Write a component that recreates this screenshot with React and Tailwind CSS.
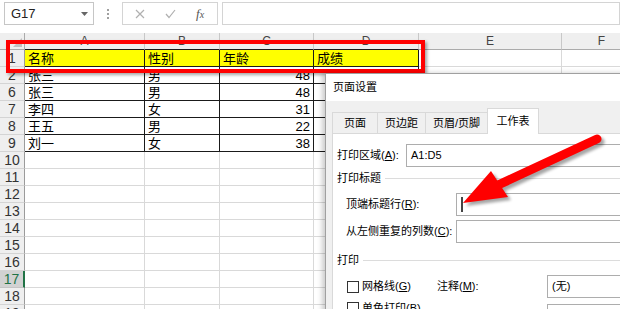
import React from "react";

const cols = [
  { key: "A", w: "w-[120px]" },
  { key: "B", w: "w-[75px]" },
  { key: "C", w: "w-[94px]" },
  { key: "D", w: "w-[105px]" },
  { key: "E", w: "w-[143px]" },
  { key: "F", w: "w-[80px]" },
];

const data = {
  1: ["名称", "性别", "年龄", "成绩"],
  2: ["张三", "男", "48", ""],
  6: ["张三", "男", "48", ""],
  7: ["李四", "女", "31", ""],
  8: ["王五", "男", "22", ""],
  9: ["刘一", "女", "38", ""],
};

const rowNums = [1, 2, 6, 7, 8, 9, 10, 11, 12, 13, 14, 15, 16, 17, 18, 19];

const RowHeader = ({ n }) => {
  if (n === 17) {
    return (
      <div className="flex h-[17px] w-[25px] shrink-0 items-center justify-center border-b border-r-2 border-b-[#c4c4c4] border-r-[#217346] bg-[#d2d2d2] text-[14px] text-[#217346]">
        {n}
      </div>
    );
  }
  return (
    <div className="flex h-[17px] w-[25px] shrink-0 items-center justify-center border-b border-r border-b-[#d4d4d4] border-r-[#9b9b9b] bg-[#efefef] text-[14px] text-[#333]">
      {n}
    </div>
  );
};

const Cell = ({ n, ci, col }) => {
  const values = data[n];
  const inTable = values && ci < 4;
  const text = values && ci < 4 ? values[ci] : "";
  const isNum = /^\d+$/.test(text);
  let cls = "flex h-[17px] shrink-0 items-center border-b border-r border-[#d9d9d9] bg-white px-[3px] text-[13px] text-black";
  if (inTable && n === 1) {
    cls = "flex h-[17px] shrink-0 items-center border-b border-r border-[#1a1a1a] bg-[#ffff00] px-[3px] text-[13px] text-black";
  } else if (inTable) {
    cls = "flex h-[17px] shrink-0 items-center border-b border-r border-[#1a1a1a] bg-white px-[3px] text-[13px] text-black";
  }
  return (
    <div className={`${cls} ${col.w} ${isNum ? "justify-end" : "justify-start"}`}>
      <span className="leading-none">{text}</span>
    </div>
  );
};

const Tab = ({ label, w, active }) =>
  active ? (
    <div className={`relative z-10 -mb-px flex h-[26px] items-center justify-center border border-b-0 border-[#d9d9d9] bg-white ${w}`}>
      {label}
    </div>
  ) : (
    <div className={`-mr-px flex h-[21px] items-center justify-center border border-b-0 border-[#d9d9d9] bg-[#f0f0f0] ${w}`}>
      {label}
    </div>
  );

const GroupTitle = ({ children, className }) => (
  <div className={`flex h-[16px] items-center ${className}`}>
    <span>{children}</span>
    <div className="ml-[4px] h-px flex-1 bg-[#dcdcdc]" />
  </div>
);

const Box = ({ children, className }) => (
  <div className={`flex h-[23px] flex-1 items-center border border-[#adadad] bg-white pl-[4px] ${className || ""}`}>
    {children}
  </div>
);

const CheckBox = () => <div className="h-[12px] w-[12px] shrink-0 border border-[#333] bg-white" />;

export default function App() {
  return (
    <div className="relative h-[309px] w-[620px] overflow-hidden bg-white font-['Liberation_Sans','Noto_Sans_CJK_SC',sans-serif]">
      {/* formula bar */}
      <div className="flex h-[33px] items-start bg-white pt-[2px]">
        <div className="ml-[4px] flex h-[23px] w-[90px] items-center justify-between border border-[#c6c6c6] pl-[6px] pr-[5px] text-[13px] text-[#222]">
          <span>G17</span>
          <svg width="7" height="4" viewBox="0 0 7 4">
            <path d="M0 0 L7 0 L3.5 4 Z" fill="#666" />
          </svg>
        </div>
        <div className="ml-[12px] flex h-[23px] w-[4px] flex-col items-center justify-center gap-[2px]">
          <div className="h-[2px] w-[2px] bg-[#a0a0a0]" />
          <div className="h-[2px] w-[2px] bg-[#a0a0a0]" />
          <div className="h-[2px] w-[2px] bg-[#a0a0a0]" />
        </div>
        <div className="ml-[12px] flex h-[23px] w-[96px] items-center border border-[#d4d4d4]">
          <svg className="ml-[12px]" width="10" height="10" viewBox="0 0 10 10">
            <path d="M1 1 L9 9 M9 1 L1 9" stroke="#b0b0b0" strokeWidth="1.2" />
          </svg>
          <svg className="ml-[20px]" width="11" height="10" viewBox="0 0 11 10">
            <path d="M1 5 L4 8.5 L10 1" stroke="#b0b0b0" strokeWidth="1.2" fill="none" />
          </svg>
          <span className="ml-[20px] font-['Liberation_Serif',serif] text-[13px] italic text-[#555]">
            f<span className="text-[10px]">x</span>
          </span>
        </div>
        <div className="ml-[4px] h-[23px] flex-1 border border-[#d4d4d4]" />
      </div>

      {/* column headers */}
      <div className="flex h-[17px]">
        <div className="relative h-[17px] w-[25px] shrink-0 border-b border-r border-[#ababab] bg-[#efefef]">
          <svg className="absolute bottom-[2px] right-[2px]" width="9" height="9" viewBox="0 0 9 9">
            <path d="M9 0 L9 9 L0 9 Z" fill="#c0c0c0" />
          </svg>
        </div>
        {cols.map((c, i) => (
          <div
            key={c.key}
            className={`flex h-[17px] shrink-0 items-center justify-center border-b border-r border-r-[#c8c8c8] bg-[#efefef] text-[12px] text-[#444] ${c.w} ${i < 4 ? "border-b-[#1a1a1a]" : "border-b-[#ababab]"}`}
          >
            {c.key}
          </div>
        ))}
      </div>

      {/* rows */}
      {rowNums.map((n) => (
        <div key={n} className="flex">
          <RowHeader n={n} />
          {cols.map((c, i) => (
            <Cell key={c.key} n={n} ci={i} col={c} />
          ))}
        </div>
      ))}

      {/* red highlight around header row */}
      <div className="absolute left-[6px] top-[40px] h-[33px] w-[419px] border-4 border-[#ff0000] shadow-[2px_2px_3px_rgba(0,0,0,0.35)]" />

      {/* page setup dialog */}
      <div className="absolute left-[325px] top-[73px] h-[250px] w-[320px] border-l border-t border-[#a0a0a0] bg-[#f0f0f0] text-[11px] text-black shadow-[-3px_0_5px_rgba(0,0,0,0.2)]">
        <div className="flex h-[27px] items-center bg-white pl-[7px]">页面设置</div>
        <div className="pl-[6px] pt-[6px]">
          <div className="flex h-[26px] items-end">
            <Tab label="页面" w="w-[46px]" />
            <Tab label="页边距" w="w-[49px]" />
            <Tab label="页眉/页脚" w="w-[63px]" />
            <Tab label="工作表" w="w-[52px]" active />
          </div>
          <div className="h-[200px] border border-[#d9d9d9] bg-white pl-[4px] pt-[10px]">
            <div className="flex items-center">
              <span className="w-[69px] shrink-0 whitespace-nowrap">
                打印区域(<u>A</u>):
              </span>
              <Box>A1:D5</Box>
            </div>
            <GroupTitle className="mt-[3px]">打印标题</GroupTitle>
            <div className="mt-[7px] flex items-center pl-[9px]">
              <span className="w-[110px] shrink-0 whitespace-nowrap">
                顶端标题行(<u>R</u>):
              </span>
              <Box>
                <div className="h-[15px] w-[2px] bg-[#444]" />
              </Box>
            </div>
            <div className="mt-[4px] flex items-center pl-[9px]">
              <span className="w-[110px] shrink-0 whitespace-nowrap">
                从左侧重复的列数(<u>C</u>):
              </span>
              <Box />
            </div>
            <GroupTitle className="mt-[9px]">打印</GroupTitle>
            <div className="mt-[7px] flex items-center pl-[10px]">
              <div className="flex w-[90px] shrink-0 items-center gap-[3px]">
                <CheckBox />
                <span className="whitespace-nowrap">
                  网格线(<u>G</u>)
                </span>
              </div>
              <span className="w-[110px] shrink-0 whitespace-nowrap">
                注释(<u>M</u>):
              </span>
              <Box>(无)</Box>
            </div>
            <div className="mt-[2px] flex items-start pl-[10px]">
              <div className="flex w-[90px] shrink-0 items-center gap-[3px]">
                <CheckBox />
                <span className="whitespace-nowrap">
                  单色打印(<u>B</u>)
                </span>
              </div>
              <span className="mt-[9px] w-[110px] shrink-0 whitespace-nowrap">错误单元格打印为(<u>E</u>):</span>
              <Box className="mt-[4px]">显示值</Box>
            </div>
          </div>
        </div>
      </div>

      {/* red arrow annotation */}
      <svg className="pointer-events-none absolute left-0 top-0" width="620" height="309" viewBox="0 0 620 309">
        <defs>
          <filter id="arrowShadow" x="-20%" y="-20%" width="140%" height="140%">
            <feGaussianBlur stdDeviation="1.6" />
          </filter>
        </defs>
        <g transform="translate(3 3)" opacity="0.35" filter="url(#arrowShadow)">
          <line x1="498" y1="185" x2="597" y2="139" stroke="#000" strokeWidth="9" strokeLinecap="round" />
          <polygon points="463,203 491,171 508,197" fill="#000" />
        </g>
        <line x1="498" y1="185" x2="597" y2="139" stroke="#ff0000" strokeWidth="9" strokeLinecap="round" />
        <polygon points="463,203 491,171 508,197" fill="#ff0000" />
      </svg>
    </div>
  );
}
